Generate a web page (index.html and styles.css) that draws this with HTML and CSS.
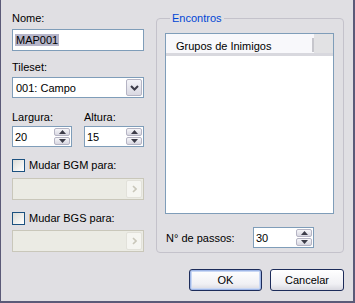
FILE: index.html
```html
<!DOCTYPE html>
<html lang="pt">
<head>
  <meta charset="UTF-8" />
  <link rel="stylesheet" href="styles.css">
</head>
<body>
  <div class="window">
    <div class="content">
      <div class="left-col">
        <div class="lbl">Nome:</div>
        <div class="textbox name-box"><span class="selected">MAP001</span></div>

        <div class="lbl tileset-lbl">Tileset:</div>
        <div class="combo">
          <span class="combo-text">001: Campo</span>
          <span class="drop-btn">
            <svg width="9" height="6" viewBox="0 0 9 6"><polyline points="1,1 4.5,4.5 8,1" fill="none" stroke="#3c3c48" stroke-width="2"/></svg>
          </span>
        </div>

        <div class="size-row">
          <div class="size-field">
            <div class="lbl">Largura:</div>
            <div class="spin">
              <span class="spin-text">20</span>
              <span class="spin-btns">
                <span class="spin-btn"><svg width="7" height="4" viewBox="0 0 7 4"><polygon points="0,4 3.5,0 7,4" fill="#3c3c48"/></svg></span>
                <span class="spin-btn"><svg width="7" height="4" viewBox="0 0 7 4"><polygon points="0,0 3.5,4 7,0" fill="#3c3c48"/></svg></span>
              </span>
            </div>
          </div>
          <div class="size-field">
            <div class="lbl">Altura:</div>
            <div class="spin">
              <span class="spin-text">15</span>
              <span class="spin-btns">
                <span class="spin-btn"><svg width="7" height="4" viewBox="0 0 7 4"><polygon points="0,4 3.5,0 7,4" fill="#3c3c48"/></svg></span>
                <span class="spin-btn"><svg width="7" height="4" viewBox="0 0 7 4"><polygon points="0,0 3.5,4 7,0" fill="#3c3c48"/></svg></span>
              </span>
            </div>
          </div>
        </div>

        <div class="check"><span class="check-box"></span>Mudar BGM para:</div>
        <div class="combo disabled">
          <span class="combo-text"></span>
          <span class="drop-btn">
            <svg width="5" height="8" viewBox="0 0 5 8"><polyline points="1,1 4,4 1,7" fill="none" stroke="#c9c7ba" stroke-width="1.6"/></svg>
          </span>
        </div>

        <div class="check bgs-check"><span class="check-box"></span>Mudar BGS para:</div>
        <div class="combo disabled bgs-combo">
          <span class="combo-text"></span>
          <span class="drop-btn">
            <svg width="5" height="8" viewBox="0 0 5 8"><polyline points="1,1 4,4 1,7" fill="none" stroke="#c9c7ba" stroke-width="1.6"/></svg>
          </span>
        </div>
      </div>

      <fieldset class="group">
        <legend>Encontros</legend>
        <div class="list">
          <div class="list-head">
            <span class="col-head">Grupos de Inimigos</span>
            <span class="col-rest"></span>
          </div>
        </div>
        <div class="steps">
          <span class="steps-lbl">N° de passos:</span>
          <div class="spin steps-spin">
            <span class="spin-text">30</span>
            <span class="spin-btns">
              <span class="spin-btn"><svg width="7" height="4" viewBox="0 0 7 4"><polygon points="0,4 3.5,0 7,4" fill="#3c3c48"/></svg></span>
              <span class="spin-btn"><svg width="7" height="4" viewBox="0 0 7 4"><polygon points="0,0 3.5,4 7,0" fill="#3c3c48"/></svg></span>
            </span>
          </div>
        </div>
      </fieldset>
    </div>

    <div class="buttons">
      <button class="btn default">OK</button>
      <button class="btn cancel">Cancelar</button>
    </div>
  </div>
</body>
</html>
```

FILE: styles.css
```css
* {
  box-sizing: border-box;
}

body {
  margin: 0;
  font-family: 'Liberation Sans', Arial, sans-serif;
  font-size: 11px;
  color: #000;
  background: #e0dfe3;
}

.window {
  width: 355px;
  height: 303px;
  background: #e0dfe3;
  border-left: 1px solid #5b5a78;
  border-right: 2px solid #5b5a78;
  border-bottom: 2px solid #5b5a78;
  padding: 12px 8px 0 11px;
}

.content {
  display: flex;
  gap: 12px;
}

.left-col {
  width: 132px;
  display: flex;
  flex-direction: column;
}

.lbl {
  line-height: 13px;
  height: 13px;
}

.textbox {
  height: 22px;
  margin-top: 4px;
  background: #fff;
  border: 1px solid #7f9db9;
  padding: 3px 0 0 2px;
  line-height: 14px;
}

.selected {
  background: #b6b5c9;
  padding: 0 1px;
}

.tileset-lbl {
  margin-top: 10px;
}

.combo {
  height: 21px;
  margin-top: 3px;
  background: #fff;
  border: 1px solid #7f9db9;
  display: flex;
  align-items: center;
  padding: 1px;
}

.combo-text {
  flex: 1;
  padding-left: 2px;
}

.drop-btn {
  width: 16px;
  height: 100%;
  display: flex;
  align-items: center;
  justify-content: center;
  border: 1px solid #b5b4c4;
  border-radius: 2px;
  background: linear-gradient(#f4f4f8, #d9d8e2);
}

.combo.disabled {
  height: 22px;
  margin-top: 6px;
  background: #ebebe4;
  border-color: #c9c7ba;
}

.combo.disabled .drop-btn {
  border-color: #e2e1da;
  background: #f5f5f1;
}

.size-row {
  display: flex;
  gap: 12px;
  margin-top: 13px;
}

.size-field {
  width: 60px;
}

.spin {
  height: 21px;
  margin-top: 2px;
  background: #fff;
  border: 1px solid #7f9db9;
  display: flex;
}

.spin-text {
  flex: 1;
  padding: 3px 0 0 2px;
  line-height: 14px;
}

.spin-btns {
  width: 17px;
  display: flex;
  flex-direction: column;
  gap: 1px;
  padding: 1px 1px 1px 0;
}

.spin-btn {
  flex: 1;
  display: flex;
  align-items: center;
  justify-content: center;
  border: 1px solid #b5b4c4;
  border-radius: 2px;
  background: linear-gradient(#f6f6f9, #d8d7e1);
}

.check {
  display: flex;
  align-items: center;
  gap: 4px;
  margin-top: 12px;
  height: 13px;
  line-height: 13px;
}

.check-box {
  width: 13px;
  height: 13px;
  border: 1px solid #1c5180;
  background: linear-gradient(135deg, #dcdcd7, #fff);
}

.bgs-combo {
  margin-top: 5px !important;
}

.group {
  width: 188px;
  height: 241px;
  margin: 0;
  padding: 8px 9px 4px 8px;
  border: 1px solid #c4c2cb;
  border-radius: 4px;
}

.group legend {
  color: #0046d5;
  padding: 0 2px;
  margin-left: 5px;
  line-height: 13px;
}

.list {
  height: 181px;
  background: #fff;
  border: 1px solid #7f9db9;
}

.list-head {
  display: flex;
  height: 22px;
  background: #f8f8fb;
  border-bottom: 3px solid #d8d8de;
}

.col-head {
  width: 148px;
  padding: 2px 0 0 10px;
  margin: 4px 0 1px 0;
  line-height: 13px;
  border-right: 2px solid #c6c6cc;
}

.col-rest {
  flex: 1;
  background: #e2e2e4;
}

.steps {
  display: flex;
  align-items: center;
  margin-top: 13px;
}

.steps-lbl {
  width: 88px;
  padding-left: 1px;
}

.steps-spin {
  width: 61px;
  margin-top: 0;
}

.buttons {
  display: flex;
  justify-content: flex-end;
  gap: 8px;
  margin-top: 16px;
  margin-right: 1px;
}

.btn {
  height: 22px;
  font-family: 'Liberation Sans', Arial, sans-serif;
  font-size: 11px;
  color: #000;
  border: 1px solid #1d2c5a;
  border-radius: 3px;
  background: linear-gradient(#ffffff, #f0f0f4 70%, #d8d8e0);
  padding: 0;
}

.btn.default {
  width: 73px;
  box-shadow: inset 0 0 0 1px #9fb6e6, inset 0 0 0 2px #cad8f4;
}

.btn.cancel {
  width: 74px;
}
```
